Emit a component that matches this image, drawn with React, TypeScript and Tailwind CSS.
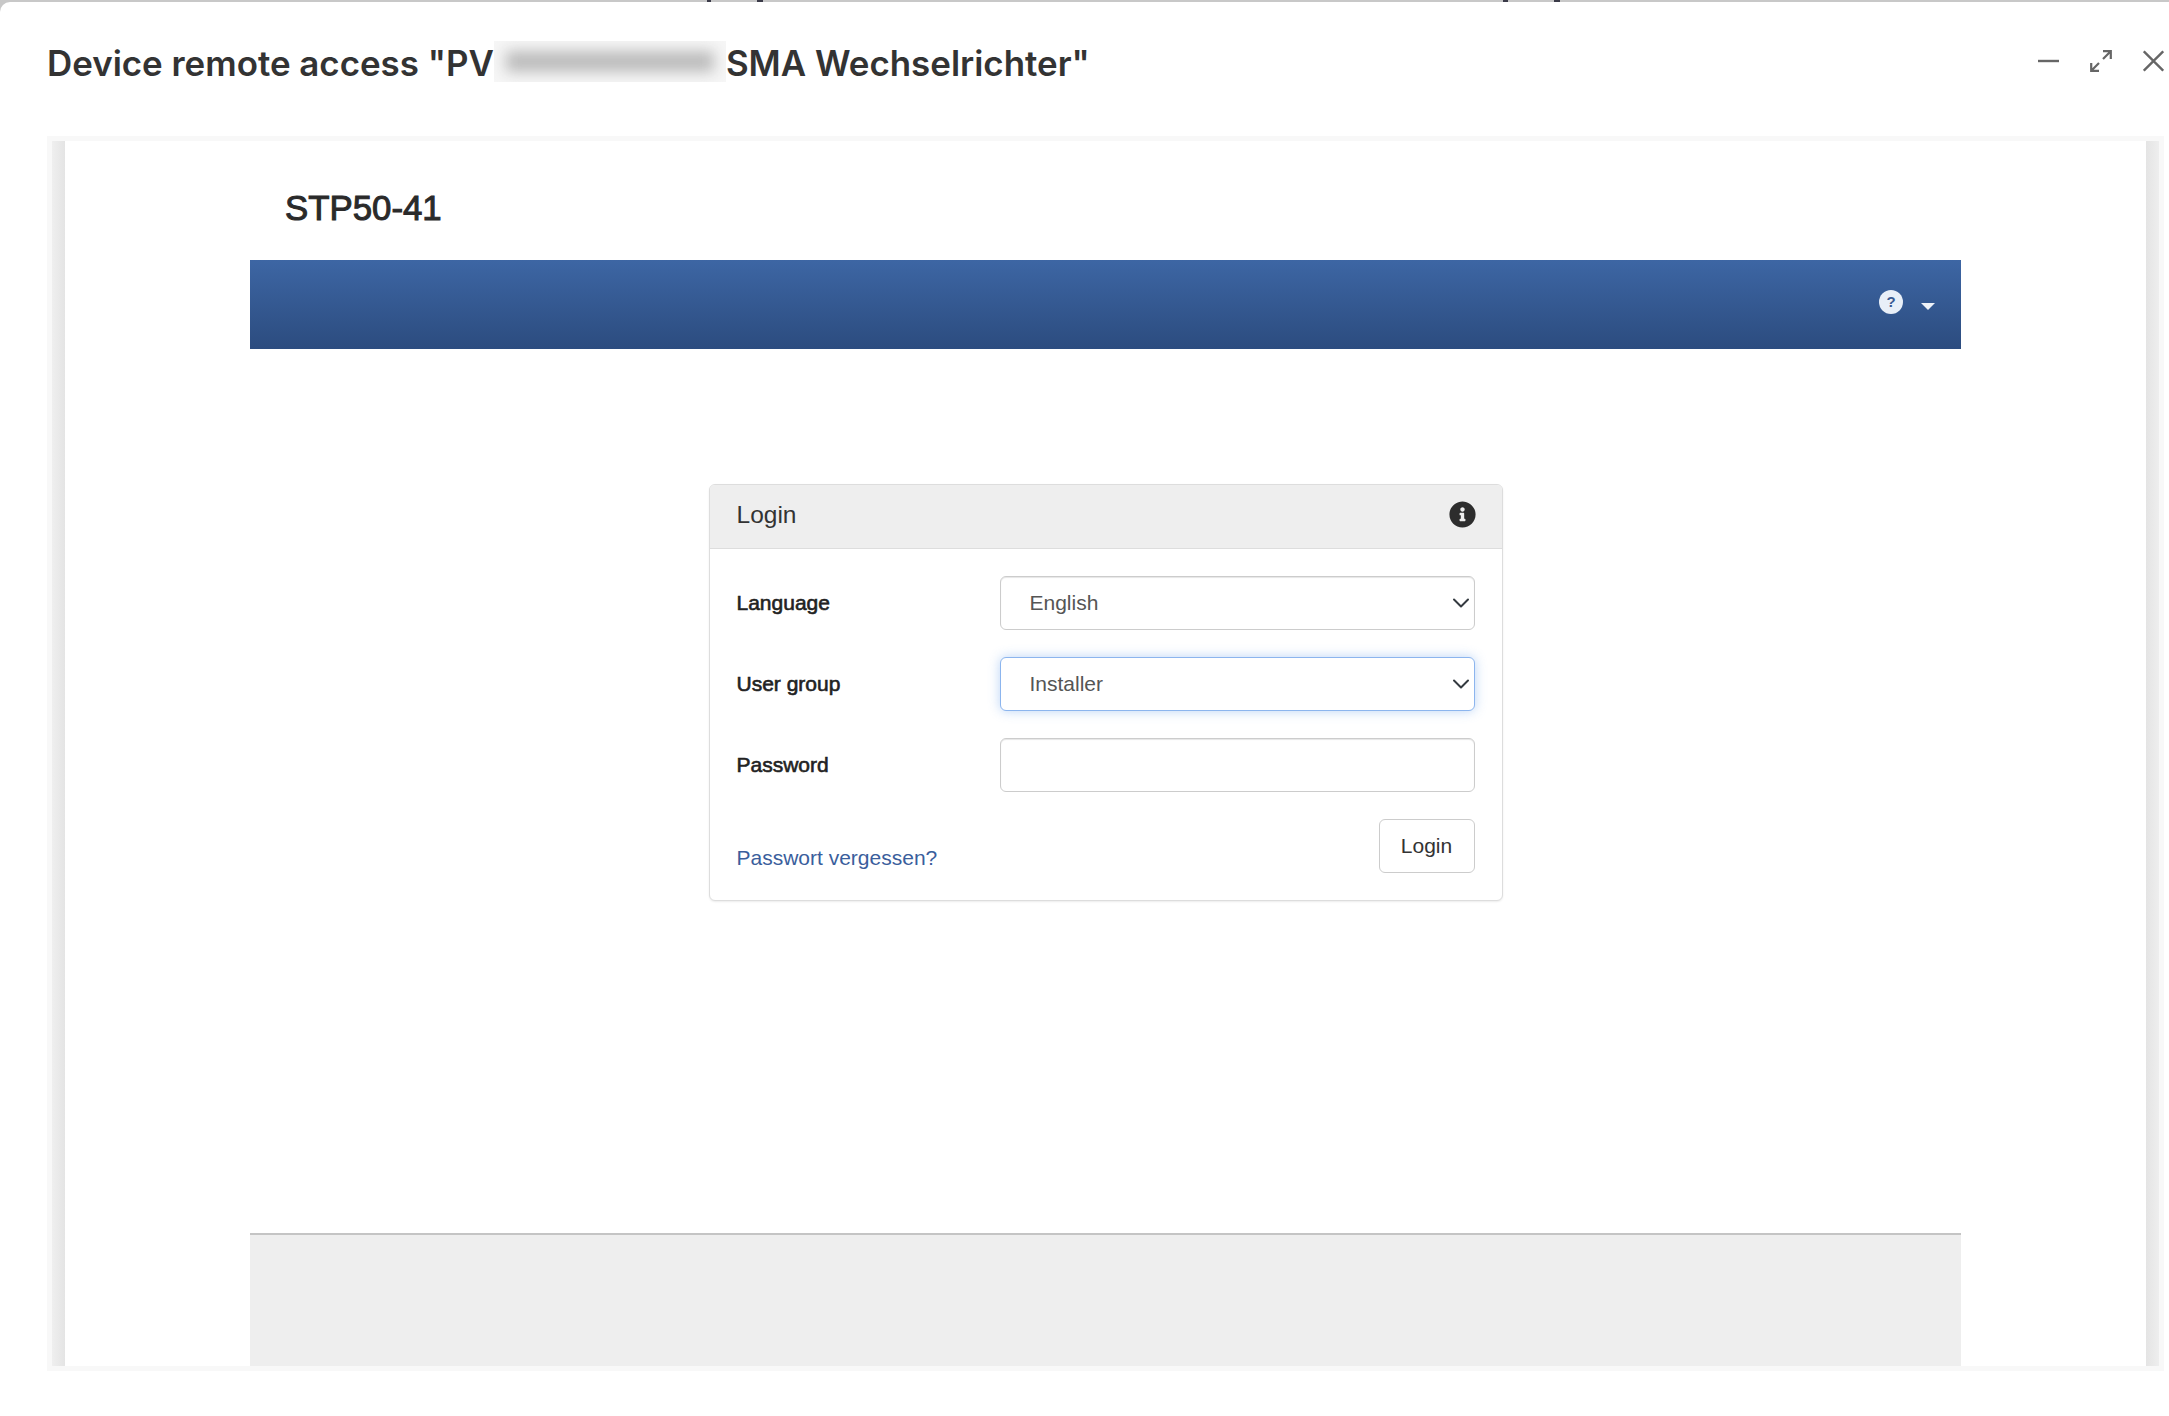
import { ChevronDown } from 'lucide-react'
import { FaInfoCircle } from 'react-icons/fa'

const ui = "font-['Liberation_Sans',Arial,sans-serif]"

function WindowControls() {
  return (
    <div className="mt-[11px] flex h-[22px] items-center gap-[31px]">
      <svg width="21" height="22" viewBox="0 0 21 22" fill="none" stroke="#666666" strokeWidth="2.4">
        <path d="M0 11h21" />
      </svg>
      <svg width="22" height="22" viewBox="0 0 22 22" fill="none" stroke="#666666" strokeWidth="2.2">
        <path d="M13 1.2h7.8V9M20.5 1.5l-7.5 7.5M1.2 13v7.8H9M1.5 20.5L9 13" />
      </svg>
      <svg width="21" height="22" viewBox="0 0 21 22" fill="none" stroke="#666666" strokeWidth="2.4">
        <path d="M0.8 1.3l19.4 19.4M20.2 1.3L0.8 20.7" />
      </svg>
    </div>
  )
}

function FieldLabel({ children }: { children: string }) {
  return <label className="w-[263px] shrink-0 text-[21px] text-[#222222] [-webkit-text-stroke:0.6px]">{children}</label>
}

function SelectField({ value, focused }: { value: string; focused?: boolean }) {
  return (
    <div className="relative flex-1">
      <select
        defaultValue={value}
        className={
          focused
            ? 'h-[54px] w-full appearance-none rounded-[6px] border border-[#8cb5ee] bg-white pl-[29px] text-[21px] text-[#555555] shadow-[0_0_12px_rgba(102,160,236,0.45)] outline-none'
            : 'h-[54px] w-full appearance-none rounded-[6px] border border-[#cccccc] bg-white pl-[29px] text-[21px] text-[#555555] shadow-[inset_0_1px_1px_rgba(0,0,0,0.1)] outline-none'
        }
      >
        <option>{value}</option>
      </select>
      <ChevronDown className="pointer-events-none absolute right-0 top-[13px] text-[#343a40]" size={28} strokeWidth={1.7} />
    </div>
  )
}

function LoginPanel() {
  return (
    <div className="w-[794px] overflow-hidden rounded-[6px] border border-[#dddddd] bg-white shadow-[0_1px_2px_rgba(0,0,0,0.08)]">
      <div className="flex h-[64px] items-center justify-between border-b border-[#dddddd] bg-[#eeeeee] pl-[27px] pr-[26px]">
        <span className="mb-[2px] text-[24.5px] text-[#333333]">Login</span>
        <FaInfoCircle size={27} className="mb-[5px] text-[#2d2d2d]" />
      </div>
      <div className="flex flex-col gap-[27px] pl-[27px] pr-[27px] pt-[27px] pb-[27px]">
        <div className="flex items-center">
          <FieldLabel>Language</FieldLabel>
          <SelectField value="English" />
        </div>
        <div className="flex items-center">
          <FieldLabel>User group</FieldLabel>
          <SelectField value="Installer" focused />
        </div>
        <div className="flex items-center">
          <FieldLabel>Password</FieldLabel>
          <input
            type="password"
            className="h-[54px] flex-1 rounded-[6px] border border-[#cccccc] bg-white shadow-[inset_0_1px_1px_rgba(0,0,0,0.1)] outline-none"
          />
        </div>
        <div className="flex items-end justify-between">
          <a className="mb-[2px] text-[21px] leading-[26px] text-[#3a5e9c]">Passwort vergessen?</a>
          <button className="h-[54px] w-[96px] rounded-[6px] border border-[#cccccc] bg-white text-[21px] text-[#333333]">
            Login
          </button>
        </div>
      </div>
    </div>
  )
}

export default function App() {
  return (
    <div className={`h-[1416px] w-full overflow-hidden bg-[#c8c8c8] ${ui}`}>
      {/* bits of the page behind the modal */}
      <div className="flex h-[2px]">
        <span className="ml-[707px] w-[4px] bg-[#3a3a48]" />
        <span className="ml-[46px] w-[6px] bg-[#3a3a48]" />
        <span className="ml-[740px] w-[5px] bg-[#3a3a48]" />
        <span className="ml-[46px] w-[6px] bg-[#3a3a48]" />
      </div>
      <div className="flex h-[1414px] flex-col rounded-tl-[10px] bg-white">
        {/* modal title */}
        <div className="flex h-[134px] shrink-0 items-start justify-between pl-[47px] pr-[5px] pt-[37px]">
          <h1 className="flex h-[48px] items-center whitespace-nowrap font-['Inter',sans-serif] text-[34.9px] font-semibold text-[#333333]">
            <span>Device remote access "PV</span>
            <span className="mb-[3px] block h-[41px] w-[232px] overflow-hidden bg-[#f6f6f6] px-[12px] py-[10px]">
              <span className="block h-full w-full bg-[#bcbcbc] blur-[7px]" />
            </span>
            <span>SMA Wechselrichter"</span>
          </h1>
          <WindowControls />
        </div>

        {/* device frame */}
        <div className="ml-[47px] mr-[5px] flex h-[1235px] shrink-0 border-[5px] border-[#f8f8f8]">
          <div className="w-[13px] shrink-0 bg-gradient-to-r from-[#efefef] to-[#e4e4e4]" />
          <div className="flex flex-1 flex-col px-[185px]">
            <div className="flex h-[119px] shrink-0 items-center pl-[35px]">
              <span className="mt-[15px] text-[34.8px] text-[#2a2a2a] [-webkit-text-stroke:1px]">STP50-41</span>
            </div>
            <div className="flex h-[89px] shrink-0 items-center justify-end bg-gradient-to-b from-[#3d66a4] to-[#2c4c7f] pr-[26px]">
              <span className="mb-[5px] flex h-[24px] w-[24px] items-center justify-center rounded-full bg-[#e8eff8] text-[15px] font-bold text-[#3a5a92]">?</span>
              <span className="ml-[18px] mt-[4px] h-0 w-0 border-x-[7px] border-t-[7px] border-x-transparent border-t-[#eef2f8]" />
            </div>
            <div className="flex flex-1 items-start justify-center pt-[135px]">
              <LoginPanel />
            </div>
            <div className="h-[133px] shrink-0 border-t-2 border-[#c4c4c4] bg-[#eeeeee]" />
          </div>
          <div className="w-[13px] shrink-0 bg-gradient-to-r from-[#e4e4e4] to-[#eeeeee]" />
        </div>
      </div>
    </div>
  )
}
